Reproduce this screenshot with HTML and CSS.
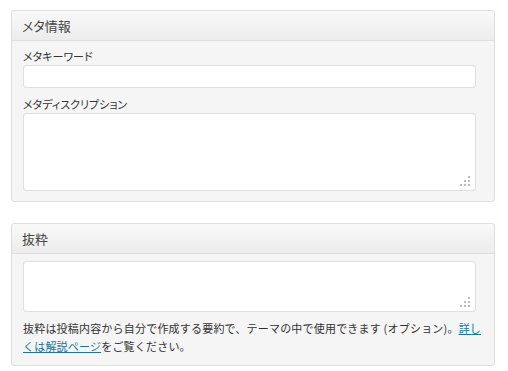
FILE: index.html
```html
<!DOCTYPE html>
<html lang="ja">
<head>
    <meta charset="UTF-8">
    <title>メタ情報</title>
    <link rel="stylesheet" href="styles.css">
</head>
<body>
    <div class="postbox">
        <h3 class="hndle">メタ情報</h3>
        <div class="inside">
            <label for="keywords">メタキーワード</label>
            <input type="text" id="keywords">
            <label for="desc" class="mt">メタディスクリプション</label>
            <div class="area">
                <textarea id="desc" class="tall"></textarea>
                <svg class="grip" width="10" height="10" viewBox="0 0 10 10">
                    <rect x="8" y="0" width="2" height="2"/>
                    <rect x="4" y="4" width="2" height="2"/>
                    <rect x="8" y="4" width="2" height="2"/>
                    <rect x="0" y="8" width="2" height="2"/>
                    <rect x="4" y="8" width="2" height="2"/>
                    <rect x="8" y="8" width="2" height="2"/>
                </svg>
            </div>
        </div>
    </div>

    <div class="postbox gap">
        <h3 class="hndle">抜粋</h3>
        <div class="inside">
            <div class="area">
                <textarea id="excerpt" class="short"></textarea>
                <svg class="grip" width="10" height="10" viewBox="0 0 10 10">
                    <rect x="8" y="0" width="2" height="2"/>
                    <rect x="4" y="4" width="2" height="2"/>
                    <rect x="8" y="4" width="2" height="2"/>
                    <rect x="0" y="8" width="2" height="2"/>
                    <rect x="4" y="8" width="2" height="2"/>
                    <rect x="8" y="8" width="2" height="2"/>
                </svg>
            </div>
            <p class="note">抜粋は投稿内容から自分で作成する要約で、テーマの中で使用できます (オプション)。<a href="#">詳しくは解説ページ</a>をご覧ください。</p>
        </div>
    </div>
</body>
</html>
```

FILE: styles.css
```css
*{
    box-sizing: border-box;
}
body{
    margin: 0;
    padding: 10px 13px 0 11px;
    background-color: #fff;
    color: #333;
    font-family: "Noto Sans CJK JP", "Liberation Sans", sans-serif;
}
.postbox{
    width: 484px;
    background-color: #f5f5f5;
    border: 1px solid #dfdfdf;
    border-radius: 3px;
}
.gap{
    margin-top: 21px;
}
.hndle{
    margin: 0;
    height: 30px;
    padding: 0 10px;
    line-height: 29px;
    font-size: 13px;
    font-weight: normal;
    font-feature-settings: "palt";
    color: #464646;
    background: linear-gradient(to bottom, #f9f9f9, #ececec);
    border-bottom: 1px solid #dfdfdf;
    border-radius: 3px 3px 0 0;
}
.inside{
    padding: 6px 18px 10px 11px;
}
label{
    display: block;
    font-size: 11px;
    line-height: 18px;
    font-feature-settings: "palt";
}
.mt{
    margin-top: 7px;
}
input, textarea{
    display: block;
    width: 453px;
    margin: 0;
    background-color: #fff;
    border: 1px solid #dfdfdf;
    border-radius: 3px;
    font-family: inherit;
}
input{
    height: 23px;
}
textarea{
    resize: none;
}
.area{
    position: relative;
    width: 453px;
}
.tall{
    height: 78px;
}
.short{
    height: 51px;
    margin-top: 1px;
}
.grip{
    position: absolute;
    right: 6px;
    bottom: 5px;
    fill: #bbb;
}
.note{
    margin: 7px -8px 0 0;
    font-size: 11px;
    line-height: 18px;
    letter-spacing: 0.2px;
}
.note a{
    color: #21759b;
}
```
